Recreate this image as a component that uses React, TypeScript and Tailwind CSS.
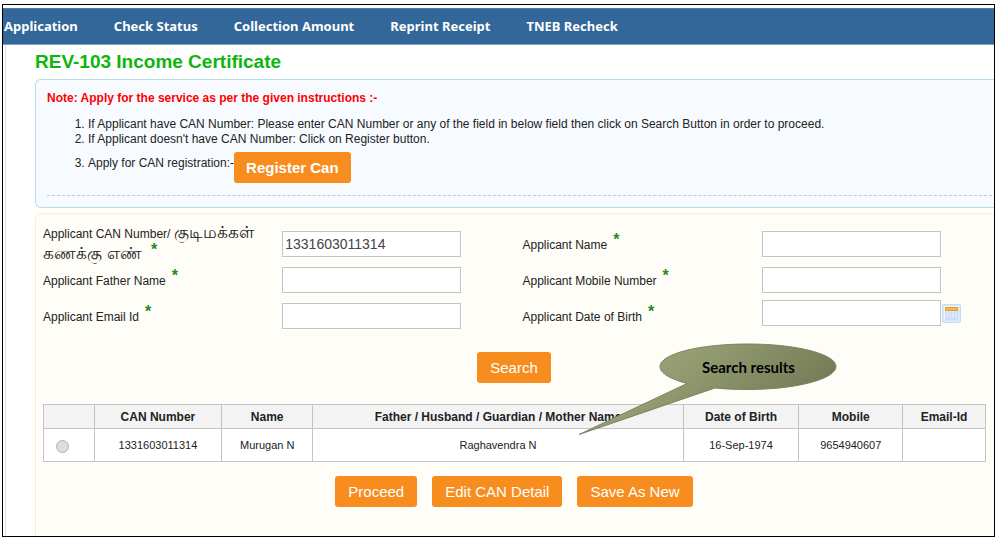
import type { ReactNode } from "react";

const menu = ["Application", "Check Status", "Collection Amount", "Reprint Receipt", "TNEB Recheck"];

function Star() {
  return <span className="relative -top-1 ml-1.5 text-base leading-none font-bold text-[#228b22]">*</span>;
}

function ActionButton({ children, bold = false }: { children: ReactNode; bold?: boolean }) {
  return (
    <button
      type="button"
      className={`h-[31px] rounded-[3px] bg-[#f88d1f] text-[15px] leading-[31px] text-white ${bold ? "px-3 font-bold" : "px-[13px]"}`}
    >
      {children}
    </button>
  );
}

function TextField({ id, value = "" }: { id: string; value?: string }) {
  return (
    <input
      id={id}
      type="text"
      defaultValue={value}
      className="h-[26px] w-[179px] border border-[#c4c4c4] bg-white px-0.5 text-sm text-[#444]"
    />
  );
}

function FieldLabel({ htmlFor, children }: { htmlFor: string; children: ReactNode }) {
  return (
    <label htmlFor={htmlFor} className="pt-0.5 text-xs leading-5">
      {children}
      <Star />
    </label>
  );
}

function CalendarIcon() {
  return (
    <svg width="19" height="19" viewBox="0 0 19 19" aria-hidden="true">
      <rect x="0.5" y="0.5" width="18" height="18" rx="1" fill="#dbe8fb" stroke="#c5dafa" />
      <rect x="2" y="2" width="14" height="14" fill="#f4f8fe" />
      <rect x="3" y="6" width="13" height="10" fill="#c9dcf8" />
      <path d="M5 7v7M8 7v7M11 7v7M14 7v7" stroke="#eef4fd" strokeWidth="1" />
      <rect x="3" y="3" width="13" height="4" fill="#e8a020" />
      <rect x="4" y="4.500" width="11" height="1" fill="#f8cf7c" />
    </svg>
  );
}

function Callout() {
  return (
    <div className="pointer-events-none absolute top-[129px] left-[542px] h-[93px] w-[259px]">
      <svg width="259" height="93" viewBox="0 0 259 93" className="absolute inset-0" aria-hidden="true">
        <defs>
          <linearGradient id="olive" x1="0" y1="0.300" x2="1" y2="0.700">
            <stop offset="0.300" stopColor="#959e73" />
            <stop offset="1" stopColor="#6d7350" />
          </linearGradient>
        </defs>
        <path
          d="M1 91.500 L109 40.500 C92 36 82 30 82 23.500 C82 11 121 1 170 1 C218 1 258 11 258 23.500 C258 36 218 46.500 170 46.500 C158 46.500 147 46 137 45 Z"
          fill="url(#olive)"
          stroke="#7d8460"
          strokeWidth="1"
        />
      </svg>
      <p className="relative ml-[82px] pt-[14px] text-center font-['Lato',sans-serif] text-[15px] leading-5 font-bold text-black">
        Search results
      </p>
    </div>
  );
}

const columns = [
  { title: "", width: "w-[5.4%]" },
  { title: "CAN Number", width: "w-[13.5%]" },
  { title: "Name", width: "w-[9.7%]" },
  { title: "Father / Husband / Guardian / Mother Name", width: "w-[39.3%]" },
  { title: "Date of Birth", width: "w-[12.3%]" },
  { title: "Mobile", width: "w-[11%]" },
  { title: "Email-Id", width: "w-[8.8%]" },
];

const record = ["1331603011314", "Murugan N", "Raghavendra N", "16-Sep-1974", "9654940607", ""];

export default function App() {
  return (
    <div className="flex min-h-screen flex-col bg-white pt-1 pr-1 pb-[3px] pl-0.5 font-['Liberation_Sans',Arial,sans-serif] text-[#222]">
      <div className="flex grow flex-col border border-black pt-[3px]">
        <nav className="flex h-[37px] items-center gap-9 border-y border-t-[#4d7aab] border-b-[#7f9fc0] bg-[#336699] pl-px font-['Noto_Sans',sans-serif] text-[13px] font-bold text-white">
          {menu.map((item) => (
            <a key={item} href="#" className="whitespace-nowrap">
              {item}
            </a>
          ))}
        </nav>

        <main className="ml-0.5 flex grow flex-col border-l border-[#e2e2e2] pl-[29px]">
          <h1 className="pt-[5px] text-[19px] leading-6 font-bold text-[#0db50d]">REV-103 Income Certificate</h1>

          <section className="mt-[5px] rounded-l-md border border-r-0 border-[#b9dcec] bg-[#f7fbff] pr-0.5 pb-[11px] pl-[11px] text-xs">
            <p className="pt-2.5 leading-4 font-bold text-[#ff0000]">
              Note: Apply for the service as per the given instructions :-
            </p>
            <ol className="list-decimal border-b border-dashed border-[#c4c8cb] pt-[11px] pb-3 pl-[41px] leading-[15px]">
              <li>
                If Applicant have CAN Number: Please enter CAN Number or any of the field in below field then click on
                Search Button in order to proceed.
              </li>
              <li>If Applicant doesn't have CAN Number: Click on Register button.</li>
              <li className="pt-[5px]">
                <div className="flex items-start">
                  <span className="pt-1">Apply for CAN registration:-</span>
                  <ActionButton bold>Register Can</ActionButton>
                </div>
              </li>
            </ol>
          </section>

          <section className="relative mt-[5px] grow rounded-tl-md border border-r-0 border-b-0 border-[#fdeecb] bg-[#fffdf7] pb-6 pl-[7px]">
            <form className="grid grid-cols-[239fr_240fr_239fr_232fr] grid-rows-[36px_36px_36px] items-center pt-3">
              <label htmlFor="can" className="pr-2 text-xs leading-5">
                Applicant CAN Number/ <span className="text-[17px] leading-5">குடிமக்கள் கணக்கு எண்</span> <Star />
              </label>
              <TextField id="can" value="1331603011314" />
              <FieldLabel htmlFor="name">Applicant Name</FieldLabel>
              <TextField id="name" />
              <FieldLabel htmlFor="father">Applicant Father Name</FieldLabel>
              <TextField id="father" />
              <FieldLabel htmlFor="mobile">Applicant Mobile Number</FieldLabel>
              <TextField id="mobile" />
              <FieldLabel htmlFor="email">Applicant Email Id</FieldLabel>
              <TextField id="email" />
              <FieldLabel htmlFor="dob">Applicant Date of Birth</FieldLabel>
              <div className="flex items-center gap-px pb-1.5">
                <TextField id="dob" />
                <button type="button" aria-label="Choose date">
                  <CalendarIcon />
                </button>
              </div>
            </form>

            <div className="flex justify-center pt-[18px] pr-[9px]">
              <ActionButton>Search</ActionButton>
            </div>

            <div className="pt-[21px] pr-2">
              <table className="w-full table-fixed border-collapse bg-white text-center text-[#222]">
                <thead>
                  <tr className="h-6 bg-[#f3f3f3] text-xs">
                    {columns.map((c) => (
                      <th key={c.title} scope="col" className={`${c.width} border border-[#c4c4c4] font-bold`}>
                        {c.title}
                      </th>
                    ))}
                  </tr>
                </thead>
                <tbody>
                  <tr className="h-[33px] text-[11px]">
                    <td className="border border-[#c4c4c4]">
                      <input
                        type="radio"
                        name="result"
                        aria-label="Select Murugan N"
                        className="mt-0.5 mr-3 size-[13px] appearance-none rounded-full border border-[#b0b0b0] bg-[#dedede] align-middle"
                      />
                    </td>
                    {record.map((v, i) => (
                      <td key={i} className="border border-[#c4c4c4]">
                        {v}
                      </td>
                    ))}
                  </tr>
                </tbody>
              </table>
            </div>

            <div className="flex justify-center gap-[15px] pt-[14px] pr-[9px]">
              <ActionButton>Proceed</ActionButton>
              <ActionButton>Edit CAN Detail</ActionButton>
              <ActionButton>Save As New</ActionButton>
            </div>

            <Callout />
          </section>
        </main>
      </div>
    </div>
  );
}
